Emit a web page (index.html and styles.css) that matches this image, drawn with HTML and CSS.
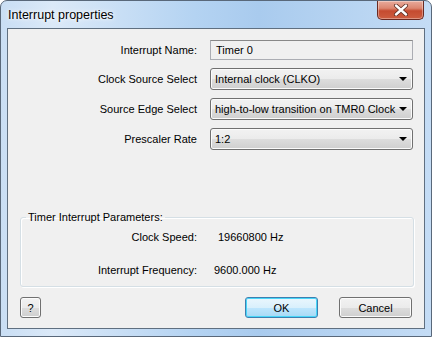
FILE: index.html
```html
<!DOCTYPE html>
<html>
<head>
<meta charset="utf-8">
<title>Interrupt properties</title>
<link rel="stylesheet" href="styles.css">
</head>
<body>
<div class="window">
	<div class="titlebar">
		<span class="title">Interrupt properties</span>
		<span class="close">
			<svg width="16" height="12" viewBox="0 0 16 12"><path d="M3 1.5 L13 10.5 M13 1.5 L3 10.5" stroke="#5a2a20" stroke-width="4" stroke-linecap="round"/><path d="M3 1.5 L13 10.5 M13 1.5 L3 10.5" stroke="#fff" stroke-width="2.4" stroke-linecap="round"/></svg>
		</span>
	</div>
	<div class="client">
		<div class="form">
			<label>Interrupt Name:</label>
			<div class="textbox">Timer 0</div>
			<label>Clock Source Select</label>
			<div class="combo"><span>Internal clock (CLKO)</span><i class="arrow"></i></div>
			<label>Source Edge Select</label>
			<div class="combo"><span>high-to-low transition on TMR0 Clock</span><i class="arrow"></i></div>
			<label>Prescaler Rate</label>
			<div class="combo"><span>1:2</span><i class="arrow"></i></div>
		</div>
		<fieldset class="group">
			<legend>Timer Interrupt Parameters:</legend>
			<div class="params">
				<span class="plabel">Clock Speed:</span><span class="pval first">19660800 Hz</span>
				<span class="plabel">Interrupt Frequency:</span><span class="pval">9600.000 Hz</span>
			</div>
		</fieldset>
		<div class="buttons">
			<span class="btn help">?</span>
			<span class="btn ok">OK</span>
			<span class="btn cancel">Cancel</span>
		</div>
	</div>
</div>
</body>
</html>
```
FILE: styles.css
```css
*{box-sizing:border-box;}
body{margin:0;font-family:"Liberation Sans",Arial,sans-serif;font-size:11px;color:#000;background:#fff;}

/* window chrome */
.window{width:432px;height:337px;padding:0 6px 7px 6px;border:1px solid #59687a;border-radius:7px 7px 0 0;background:linear-gradient(90deg,#c9def4 0%,#dbe9f8 12%,#b4d3f2 45%,#a9cbee 60%,#c4dcf5 100%);display:flex;flex-direction:column;}
.titlebar{height:27px;display:flex;align-items:flex-start;justify-content:space-between;}
.title{margin:7px 0 0 1px;font-size:12.5px;text-shadow:0 0 6px #fff,0 0 3px #fff;}
.close{width:47px;height:19px;margin-right:1px;border:1px solid #6a2a22;border-top:0;border-radius:0 0 5px 5px;background:linear-gradient(#e8ab9c 0%,#dc8670 40%,#c54b30 55%,#cd5d40 100%);display:flex;align-items:center;justify-content:center;box-shadow:inset 0 0 0 1px rgba(255,255,255,.35);}
.client{flex:1;background:#f0f0f0;border:1px solid #5f6f80;display:flex;flex-direction:column;}

/* top form */
.form{display:grid;grid-template-columns:189px 203px;grid-template-rows:20px 22px 22px 22px;column-gap:13px;row-gap:8px;margin-top:11px;}
.form label{text-align:right;align-self:center;white-space:nowrap;}
.textbox{border:1px solid #abadb3;border-top-color:#888;background:#f0f0f0;padding:0 5px;line-height:18px;}
.combo{border:1px solid #707070;border-radius:3px;background:linear-gradient(#f2f2f2 0%,#ebebeb 50%,#dddddd 51%,#cfcfcf 100%);display:flex;align-items:center;justify-content:space-between;padding:0 5px 0 4px;white-space:nowrap;box-shadow:inset 0 0 0 1px #fbfbfb;}
.arrow{width:0;height:0;border-left:4px solid transparent;border-right:4px solid transparent;border-top:4px solid #000;}

/* group box */
.group{margin:60px 0 0 12px;width:394px;height:77px;border:1px solid #d5dfe5;border-radius:3px;padding:0;box-shadow:inset 1px 1px 0 #fff,1px 1px 0 #fff;}
.group legend{margin-left:5px;padding:0 2px;line-height:14px;}
.params{display:grid;grid-template-columns:176px 1fr;column-gap:17px;row-gap:21px;margin-top:7px;}
.plabel{text-align:right;}
.pval.first{padding-left:4px;}

/* buttons */
.buttons{display:flex;margin:10px 0 0 12px;}
.btn{height:21px;border:1px solid #707070;border-radius:3px;background:linear-gradient(#f2f2f2 0%,#ebebeb 50%,#dddddd 51%,#cfcfcf 100%);display:flex;align-items:center;justify-content:center;box-shadow:inset 0 0 0 1px #fbfbfb;}
.help{width:21px;}
.ok{width:73px;margin-left:204px;border-color:#3c7fb1;background:linear-gradient(#eaf6fd 0%,#d9f0fc 50%,#bee6fd 51%,#a7d9f5 100%);box-shadow:inset 0 0 0 1px #48d6f8;}
.cancel{width:73px;margin-left:21px;}
```
